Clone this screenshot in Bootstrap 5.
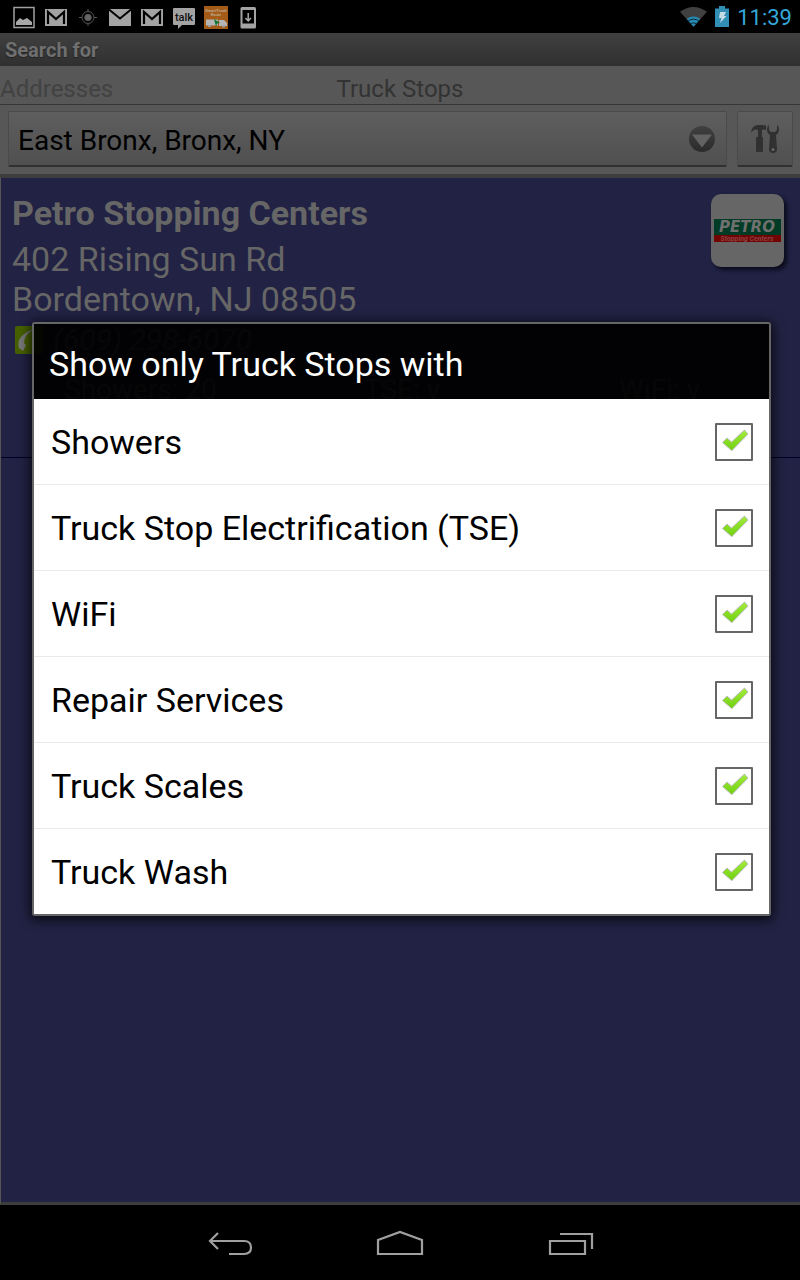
<!DOCTYPE html>
<html lang="en">
<head>
<meta charset="utf-8">
<meta name="viewport" content="width=device-width, initial-scale=1">
<title>Search for Truck Stops</title>
<link href="https://cdn.jsdelivr.net/npm/bootstrap@5.3.0/dist/css/bootstrap.min.css" rel="stylesheet">
<style>
  body { font-family: Roboto, "Noto Sans", sans-serif; background: #000; color: #666; line-height: 1; }
  .status-bar { height: 33px; padding: 0 8px 0 8px; }
  .status-icons svg { width: 32px; height: 32px; }
  .status-info { gap: 8px; }
  .clock { color: #33a8d8; font-size: 22px; padding-top: 2px; }
  .title-bar { height: 33px; padding: 0 5px; font-size: 20px; font-weight: 700; color: #6f6f6f; background: linear-gradient(#404040, #303030); text-shadow: 0 1px 1px #222; }
  .search-panel { background: #575757; border-bottom: 4px solid #3d3d3d; }
  .mode-tabs { height: 39px; border-bottom: 1px solid #363636; font-size: 24px; display: grid; grid-template-columns: 1fr auto 1fr; align-items: center; padding-top: 8px; }
  .mode-tabs a { text-decoration: none; color: #333; }
  .mode-tabs a.inactive { color: #424242; }
  .controls { padding: 6px 7px 7px 8px; gap: 10px; }
  .place-select, .tool-btn { height: 56px; border: 1px solid #4a4a4a; border-bottom: 2px solid #303030; border-radius: 2px; background-color: #575757; background-image: linear-gradient(#5e5e5e, #505050); }
  .place-select { appearance: none; color: #000; font-size: 28px; padding: 4px 60px 0 9px; min-width: 0;
    background-image: url("data:image/svg+xml,%3Csvg xmlns='http://www.w3.org/2000/svg' width='28' height='28'%3E%3Cdefs%3E%3ClinearGradient id='g' x2='0' y2='1'%3E%3Cstop stop-color='%23404040'/%3E%3Cstop offset='1' stop-color='%232b2b2b'/%3E%3C/linearGradient%3E%3C/defs%3E%3Ccircle cx='14' cy='14' r='13' fill='url(%23g)'/%3E%3Cpath d='M4 9.500h20L14 22.500z' fill='%23626262'/%3E%3C/svg%3E"), linear-gradient(#5e5e5e, #505050);
    background-repeat: no-repeat; background-position: right 10px center, 0 0; }
  .tool-btn { width: 56px; padding: 0; flex: none; }
  .results { background: #222244; border-left: 1px solid #555; border-bottom: 3px solid #3d3d3d; }
  .stop-item { border-bottom: 1px solid #000024; padding: 16px 16px 0 11px; height: 280px; }
  .stop-text { margin-top: -1px; }
  .stop-name { font-size: 34px; line-height: 40px; font-weight: 700; margin: 0 0 6px; }
  .stop-address { font-size: 34px; line-height: 40px; margin: 0; }
  .stop-phone { font-size: 30px; line-height: 42px; font-style: italic; color: #666; text-decoration: none; gap: 10px; padding-left: 3px; }
  .stop-facts { font-size: 28px; line-height: 40px; margin-top: 9px; padding-left: 52px; display: grid; grid-template-columns: 300px 255px 1fr; }
  .brand { width: 73px; height: 73px; flex: none; border-radius: 10px; background: #666; box-shadow: 3px 3px 4px #0b0b1c; }
  .filter-layer { inset: 0; padding: 0 29px 0 32px; }
  .filter-dialog { border: 2px solid #666; border-radius: 3px; box-shadow: 0 2px 12px 2px rgba(0,0,0,.75); }
  .filter-dialog h1 { height: 75px; padding: 6px 15px 0; margin: 0; font-size: 34px; font-weight: 400; color: #fff; background: rgba(0,0,0,.94); }
  .filter-row { height: 86px; padding: 0 16px 0 17px; font-size: 34px; color: #000; background: #fff; border-bottom: 1px solid #ebebeb; }
  .filter-row:last-child { height: 85px; border: 0; }
  .filter-row input { appearance: none; width: 38px; height: 38px; margin: 0; border: 2px solid #666; border-radius: 1px; background: #fff; }
  .filter-row input:checked { background: #fff url("data:image/svg+xml,%3Csvg xmlns='http://www.w3.org/2000/svg' width='34' height='34'%3E%3Cdefs%3E%3ClinearGradient id='g' x2='0' y2='1'%3E%3Cstop stop-color='%23a4ec3c'/%3E%3Cstop offset='1' stop-color='%2370d010'/%3E%3C/linearGradient%3E%3C/defs%3E%3Cpath d='M5.500 17.500L10 13l4.500 4L27.500 5L31 9L14.800 25.700z' fill='url(%23g)' stroke='%23bdbdbd' stroke-linejoin='round'/%3E%3C/svg%3E") center no-repeat; }
  .nav-keys { height: 75px; padding: 0 145px; }
  .nav-keys button { flex: 1; background: none; border: 0; padding: 3px 0 0; }
</style>
</head>
<body class="d-flex flex-column min-vh-100">

<header class="status-bar d-flex align-items-center justify-content-between">
  <div class="status-icons d-flex" aria-hidden="true">
    <svg viewBox="0 0 32 32"><path d="M6 6.500h20v20H6z" fill="none" stroke="#a0a0a0" stroke-width="1.500"/><path d="M8 24v-3l4-4 3 2 4-2 5 4v3z" fill="#a8a8a8"/></svg>
    <svg viewBox="0 0 32 32"><path d="M5 8h22v17H5z" fill="#a3a3a3"/><path d="M8 23V11l8 7 8-7v12" fill="none" stroke="#000" stroke-width="2.200"/></svg>
    <svg viewBox="0 0 32 32" fill="none" stroke="#555"><circle cx="16" cy="16.500" r="6"/><circle cx="16" cy="16.500" r="3.300" fill="#666"/><path d="M16 8v3M16 22v3M7 16.500h3M22 16.500h3"/></svg>
    <svg viewBox="0 0 32 32"><path d="M5 8h22v17H5z" fill="#a3a3a3"/><path d="M5 8.500l11 9 11-9" fill="none" stroke="#000" stroke-width="2"/></svg>
    <svg viewBox="0 0 32 32"><path d="M5 8h22v17H5z" fill="#a3a3a3"/><path d="M8 23V11l8 7 8-7v12" fill="none" stroke="#000" stroke-width="2.200"/></svg>
    <svg viewBox="0 0 32 32"><path d="M6 7h20q1 0 1 1v15q0 1-1 1H14l-4 4v-4H6q-1 0-1-1V8q0-1 1-1z" fill="#a3a3a3"/><text x="16" y="20" text-anchor="middle" font-size="11" font-weight="500" fill="#111">talk</text></svg>
    <svg viewBox="0 0 32 32"><path d="M4 5h24v23H4z" fill="#a45b17"/><g fill="#bda88c" text-anchor="middle" font-weight="700"><text x="16" y="11" font-size="4">SmartTruck</text><text x="16" y="15" font-size="4">Route</text></g><path d="M6 18.500h12v6H6zM19 19h5l3 3v3h-8z" fill="#b5b5b5"/><path d="M14 18l6 4-3 .5-1 3z" fill="#08752c"/><path d="M8 25h3M22 25.500h3" stroke="#999" stroke-width="2"/></svg>
    <svg viewBox="0 0 32 32"><rect x="8.500" y="6" width="15.500" height="21.500" rx="1.500" fill="#a3a3a3"/><path d="M10.500 9h11.500v13.500H10.500z" fill="#000"/><path d="M16.200 12v7M13.500 17l2.700 3 2.700-3" fill="none" stroke="#aaa" stroke-width="1.500"/></svg>
  </div>
  <div class="status-info d-flex align-items-center">
    <svg width="27" height="22" viewBox="0 0 28 22" aria-label="Wi-Fi"><path d="M0 5.500Q14-4.500 28 5.500L14 21z" fill="#404040"/><path d="M7 13Q14 8 21 13L14 21z" fill="#2789b0"/><path d="M8.500 15Q14 11.500 19.500 15M11 18q3-2 6 0" fill="none" stroke="#082835"/></svg>
    <svg width="14" height="22" viewBox="0 0 14 22" aria-label="Battery charging"><path d="M0 2.500h4V0h6v2.500h4V21H0z" fill="#318fb5"/><path d="M5 6h6l-2 4h2.500L5 17l1.500-5H4z" fill="#c5dce5"/></svg>
    <time class="clock">11:39</time>
  </div>
</header>

<div class="position-relative flex-grow-1 d-flex flex-column">
  <div class="title-bar d-flex align-items-center">Search for</div>

  <section class="search-panel">
    <nav class="mode-tabs">
      <a class="inactive" href="#addresses">Addresses</a>
      <a href="#truck-stops">Truck Stops</a>
    </nav>
    <div class="controls d-flex">
      <select class="place-select flex-grow-1" aria-label="Location"><option>East Bronx, Bronx, NY</option></select>
      <button class="tool-btn" type="button" aria-label="Filter settings">
        <svg width="28" height="30" viewBox="0 0 28 30" fill="#303030"><path d="M0 9Q1 1 7 1h5q2 1 3 0v5q-2-1-4 0v7H7V6Q3 4 0 9z"/><rect x="5" y="13" width="7" height="15" rx="1"/><path d="M18 1v5l2 2h4l2-2V1q2 1 2 5 0 3-3 5l1 14q0 4-4 4t-4-4l1-14q-3-2-3-5 0-4 2-5z"/><circle cx="22" cy="25.500" r="1.500" fill="#666"/></svg>
      </button>
    </div>
  </section>

  <main class="results flex-grow-1">
    <article class="stop-item">
      <div class="d-flex justify-content-between">
        <div class="stop-text">
          <h2 class="stop-name">Petro Stopping Centers</h2>
          <p class="stop-address">402 Rising Sun Rd<br>Bordentown, NJ 08505</p>
        </div>
        <svg class="brand" viewBox="0 0 73 73" role="img" aria-label="Petro Stopping Centers"><path d="M3 25h67v16H3z" fill="#003c25"/><path d="M3 41h67v7H3z" fill="#720303"/><text x="36" y="38" text-anchor="middle" font-family="DejaVu Sans" font-size="15" font-weight="700" font-style="italic" fill="#707070">PETRO</text><text x="36" y="47" text-anchor="middle" font-size="7" font-weight="700" font-style="italic" fill="#8a4444">Stopping Centers</text></svg>
      </div>
      <a class="stop-phone d-flex align-items-center" href="tel:6092986070">
        <svg width="28" height="28" viewBox="0 0 28 28" aria-hidden="true"><rect width="28" height="28" rx="2" fill="#466000"/><path d="M18 4Q9 9 9 17l2 2-3 6-4-3q-2-6 2-11 5-6 12-7z" fill="#777"/></svg>
        (609) 298-6070
      </a>
      <div class="stop-facts"><span>Showers: 20</span><span>TSE: y</span><span>WiFi: y</span></div>
    </article>
  </main>

  <div class="filter-layer position-absolute d-flex align-items-center">
    <form class="filter-dialog w-100" role="dialog" aria-labelledby="filter-title">
      <h1 id="filter-title" class="d-flex align-items-center">Show only Truck Stops with</h1>
      <label class="filter-row d-flex align-items-center justify-content-between">Showers<input type="checkbox" checked></label>
      <label class="filter-row d-flex align-items-center justify-content-between">Truck Stop Electrification (TSE)<input type="checkbox" checked></label>
      <label class="filter-row d-flex align-items-center justify-content-between">WiFi<input type="checkbox" checked></label>
      <label class="filter-row d-flex align-items-center justify-content-between">Repair Services<input type="checkbox" checked></label>
      <label class="filter-row d-flex align-items-center justify-content-between">Truck Scales<input type="checkbox" checked></label>
      <label class="filter-row d-flex align-items-center justify-content-between">Truck Wash<input type="checkbox" checked></label>
    </form>
  </div>
</div>

<footer class="nav-keys d-flex">
  <button type="button" aria-label="Back"><svg width="50" height="30" viewBox="0 0 50 30" fill="none" stroke="#a0a0a0" stroke-width="2.200"><path d="M13 4L5 12l8 8M5 12h34q7 0 7 6.500T39 25H24"/></svg></button>
  <button type="button" aria-label="Home"><svg width="50" height="30" viewBox="0 0 50 30" fill="none" stroke="#a0a0a0" stroke-width="2.200"><path d="M3 25V11l22-8 22 8v14z"/></svg></button>
  <button type="button" aria-label="Recent apps"><svg width="50" height="30" viewBox="0 0 50 30" fill="none" stroke="#a0a0a0" stroke-width="2.200"><path d="M5 12h35v13H5zM15 5h32v15"/></svg></button>
</footer>

<script src="https://cdn.jsdelivr.net/npm/bootstrap@5.3.0/dist/js/bootstrap.bundle.min.js"></script>
</body>
</html>
